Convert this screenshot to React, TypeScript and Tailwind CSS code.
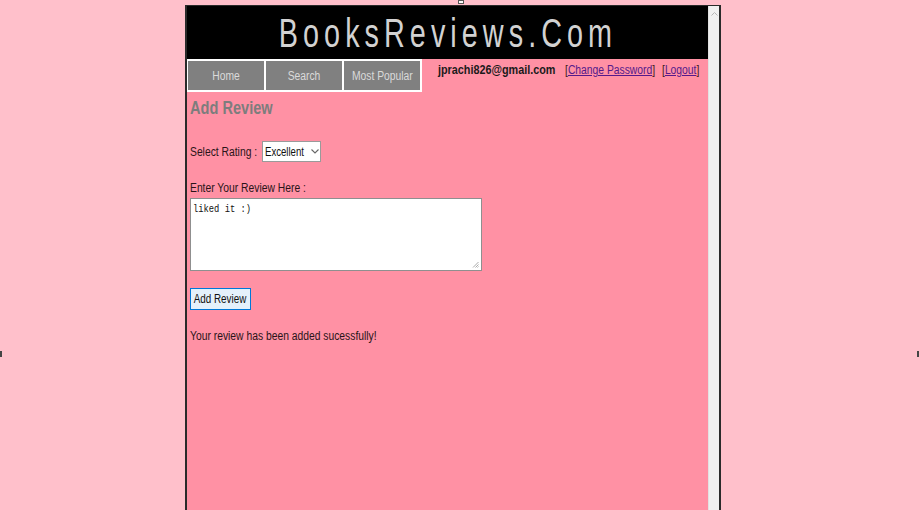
const FONT = "font-['Liberation_Sans',Arial,sans-serif]";

function Narrow({ children, k = "scale-x-[0.86]" }: { children: React.ReactNode; k?: string }) {
  return <span className={`inline-block whitespace-nowrap origin-left ${k}`}>{children}</span>;
}

const navItems = ["Home", "Search", "Most Popular"];

export default function App() {
  return (
    <div className={`relative min-h-screen bg-[#ffc0cb] pl-[185px] pt-[5px] ${FONT}`}>
      {/* stray marks from the capture */}
      <div className="absolute left-[458px] top-0 h-[4px] w-[6px] border border-[#555] bg-white" />
      <div className="absolute left-0 top-[351px] h-[6px] w-[2px] bg-[#444]" />
      <div className="absolute right-0 top-[351px] h-[6px] w-[2px] bg-[#444]" />

      <div className="flex h-[505px] w-[536px] border-l-2 border-t border-[#2a2a2a]">
        {/* page */}
        <div className="flex w-[521px] flex-col bg-[#ff91a4]">
          <header className="flex h-[53px] items-center justify-center bg-black">
            <span className="inline-block origin-center scale-x-[0.72] whitespace-nowrap text-[40px] font-normal leading-none tracking-[7px] text-[#d2d2d2]">
              BooksReviews.Com
            </span>
          </header>

          <div className="flex">
            <nav className="flex gap-[2px] border-2 border-l border-white bg-white">
              {navItems.map((n) => (
                <div
                  key={n}
                  className="flex h-[29px] w-[76px] items-center justify-center bg-[#808080] text-[12px] text-[#dadada]"
                >
                  <span className="inline-block origin-center scale-x-[0.86] whitespace-nowrap">{n}</span>
                </div>
              ))}
            </nav>
            <div className="flex pl-[16px] pt-[3px] text-[12px] leading-[16px]">
              <div className="w-[115px] font-bold text-[#1a1a1a]">
                <Narrow k="scale-x-[0.9]">jprachi826@gmail.com</Narrow>
              </div>
              <div className="ml-[12px] w-[88px] text-[#3a1a1a]">
                <Narrow k="scale-x-[0.86]">
                  [<span className="text-[#551a8b] underline">Change Password</span>]
                </Narrow>
              </div>
              <div className="ml-[9px] w-[40px] text-[#3a1a1a]">
                <Narrow k="scale-x-[0.86]">
                  [<span className="text-[#551a8b] underline">Logout</span>]
                </Narrow>
              </div>
            </div>
          </div>

          <main className="flex flex-col pl-[3px] text-[12px] text-[#2a1418]">
            <h1 className="mt-[5px] h-[22px] text-[18px] font-bold leading-[22px] text-[#7d7d7d]">
              <Narrow k="scale-x-[0.81]">Add Review</Narrow>
            </h1>

            <div className="mt-[22px] flex h-[21px] items-center">
              <div className="w-[72px]">
                <Narrow>Select Rating :</Narrow>
              </div>
              <div className="flex h-[21px] w-[59px] items-center border border-[#9a9a9a] bg-white pl-[2px] text-[#111]">
                <div className="w-[46px] overflow-visible">
                  <Narrow k="scale-x-[0.8]">Excellent</Narrow>
                </div>
                <svg width="8" height="5" viewBox="0 0 8 5" className="shrink-0 text-[#666]">
                  <path d="M0.5 0.5 L4 4 L7.5 0.5" fill="none" stroke="currentColor" strokeWidth="1.1" />
                </svg>
              </div>
            </div>

            <div className="mt-[18px] h-[16px] leading-[16px]">
              <Narrow>Enter Your Review Here :</Narrow>
            </div>

            <div className="relative mt-[2px] h-[73px] w-[292px] border border-[#8f8f8f] bg-white px-[2px] py-[3px] font-['Liberation_Mono',monospace] text-[11px] leading-[14px] text-[#111]">
              <Narrow k="scale-x-[0.8]">liked it :)</Narrow>
              <svg width="7" height="7" viewBox="0 0 7 7" className="absolute bottom-[2px] right-[2px] text-[#aaa]">
                <path d="M6.5 1 L1 6.5 M6.5 3.5 L3.5 6.5 M6.5 5.5 L5.5 6.5" stroke="currentColor" strokeWidth="1" />
              </svg>
            </div>

            <button className="mt-[17px] flex h-[22px] w-[61px] items-center justify-center border border-[#0078d7] bg-[#e5f1fb] text-[12px] text-[#111]">
              <span className="inline-block origin-center scale-x-[0.82] whitespace-nowrap">Add Review</span>
            </button>

            <div className="mt-[18px] h-[16px] leading-[16px]">
              <Narrow>Your review has been added sucessfully!</Narrow>
            </div>
          </main>
        </div>

        {/* scrollbar */}
        <div className="flex w-[11px] flex-col items-center border-l border-[#e2e2e2] bg-[#f0f0f0] pt-[6px]">
          <svg width="7" height="4" viewBox="0 0 7 4" className="text-[#b5b5b5]">
            <path d="M0.5 3.5 L3.5 0.5 L6.5 3.5" fill="none" stroke="currentColor" strokeWidth="1" />
          </svg>
        </div>
        <div className="w-[2px] bg-[#2a2a2a]" />
      </div>
    </div>
  );
}
